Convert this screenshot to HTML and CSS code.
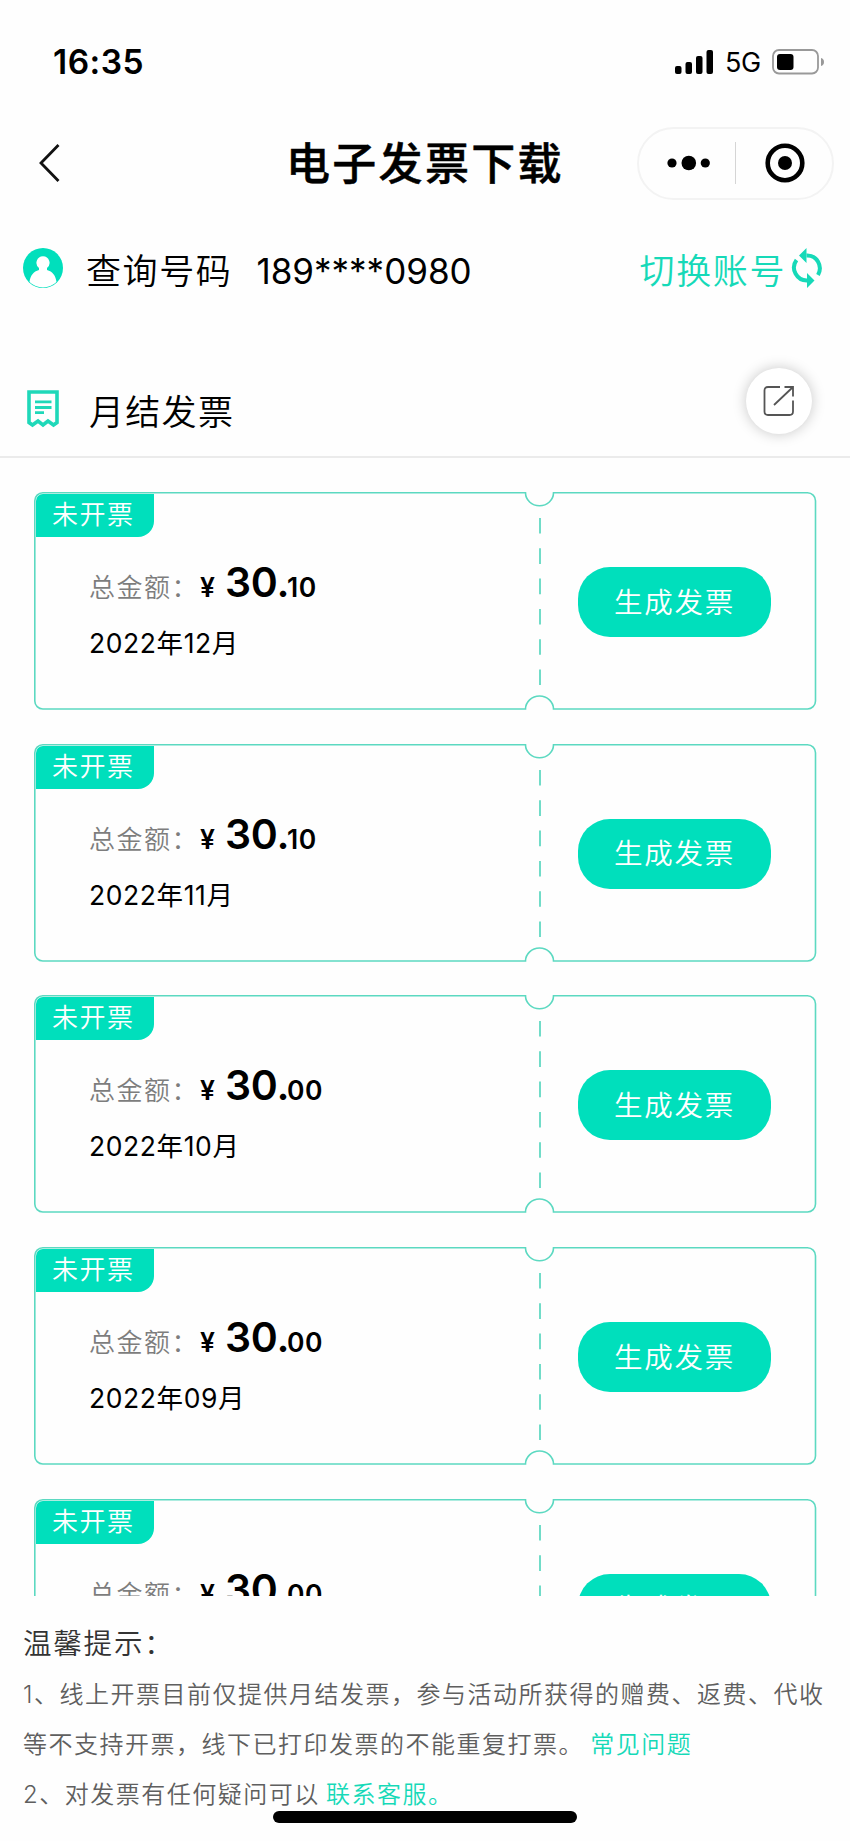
FILE: index.html
```html
<!DOCTYPE html>
<html lang="zh-CN">
<head>
<meta charset="utf-8">
<title>电子发票下载</title>
<link rel="stylesheet" href="styles.css">
</head>
<body>
<svg class="defs" width="0" height="0">
  <symbol id="ticket" viewBox="0 0 783 218">
    <path d="M8.8 .8H491.500A14 13 0 0 0 519.500 .8H773.500A8 8 0 0 1 781.500 8.800V209A8 8 0 0 1 773.500 217H519.500A14 13 0 0 0 491.500 217H8.800A8 8 0 0 1 .8 209V8.800A8 8 0 0 1 8.800 .8" fill="none" stroke="#5cd9c1" stroke-width="1.600"/>
    <path d="M506 26V194" stroke="#71dcc8" stroke-width="2" stroke-dasharray="15.600 14.700"/>
  </symbol>
</svg>
<div class="phone">
  <header class="status">
    <span class="time">16:35</span>
    <div class="signals">
      <svg width="40" height="26" viewBox="0 0 40 26"><rect x="1" y="17" width="6.500" height="8" rx="2"/><rect x="11.500" y="13" width="6.500" height="12" rx="2"/><rect x="22" y="7" width="6.500" height="18" rx="2"/><rect x="32.500" y="1" width="6.500" height="24" rx="2"/></svg>
      <span class="net">5G</span>
      <svg width="54" height="26" viewBox="0 0 54 26"><rect x="1" y="1" width="45" height="23.500" rx="6" fill="none" stroke="#999" stroke-width="1.800"/><rect x="5" y="5" width="16.500" height="16" rx="3"/><path d="M49 9C53 9.500 53 16.500 49 17Z" fill="#999"/></svg>
    </div>
  </header>
  <nav class="nav">
    <svg class="back" width="24" height="42" viewBox="0 0 24 42"><path d="M21.500 3L4 21L21.500 39" fill="none" stroke="#111" stroke-width="2.800"/></svg>
    <h1 class="title">电子发票下载</h1>
    <div class="capsule">
      <svg width="46" height="20" viewBox="0 0 46 20"><circle cx="6" cy="10" r="4.600"/><circle cx="22.800" cy="10" r="7.300"/><circle cx="39.300" cy="10" r="4.600"/></svg>
      <i class="bar"></i>
      <svg width="42" height="42" viewBox="0 0 42 42"><circle cx="21" cy="21" r="17.300" fill="none" stroke="#000" stroke-width="4.600"/><circle cx="21" cy="21" r="7"/></svg>
    </div>
  </nav>
  <section class="account">
    <svg class="avatar" width="40" height="40" viewBox="0 0 40 40"><circle cx="20" cy="20" r="20" fill="#00dfbc"/><path d="M20 8.200a6.600 6.600 0 0 1 4 11.800v2c5.500 1.300 8.800 5.800 9.500 12A19.400 19.400 0 0 1 6.500 34c.7-6.200 4-10.700 9.500-12v-2A6.600 6.600 0 0 1 20 8.200Z" fill="#fff"/></svg>
    <span class="label">查询号码</span>
    <span class="number">189****0980</span>
    <a class="switch">切换账号<svg width="32" height="42" viewBox="0 0 32 42"><g fill="none" stroke="#16d9b8" stroke-width="4"><path d="M15.500 8.500C26 8 32 19 27 28"/><path d="M16.500 33.500C6 34 -1 22 5.500 13"/></g><path d="M15.500 1V16L8 8.500ZM16 26V41L23.500 33.500Z" fill="#16d9b8"/></svg></a>
  </section>
  <section class="heading">
    <svg class="receipt" width="32" height="38" viewBox="0 0 32 38"><path d="M2 2H30V32.500L26.500 35L21 31L16 35L11 31L5.500 35L2 32.500Z" fill="none" stroke="#1fd8b9" stroke-width="3.600"/><path d="M8 11.800H24.500M8 17.500H24.500M8 22.700H17" stroke="#1fd8b9" stroke-width="2.800"/></svg>
    <h2 class="label">月结发票</h2>
    <button class="share"><svg width="32" height="32" viewBox="0 0 32 32"><g fill="none" stroke="#555" stroke-width="1.800"><path d="M17 2H5Q1.500 2 1.500 5.500V26.500Q1.500 30 5 30H26.500Q30 30 30 26.500V15.500"/><path d="M11 20L30 2M21.500 2H30V11.500"/></g></svg></button>
  </section>
  <main class="list">
    <article class="card"><svg class="outline"><use href="#ticket"/></svg><span class="tag">未开票</span><div class="info"><p class="amount"><span class="sum">总金额：</span><b class="yen">¥</b><b class="big">30.</b><b class="cents">10</b></p><p class="date">2022年12月</p></div><button class="make">生成发票</button></article>
    <article class="card"><svg class="outline"><use href="#ticket"/></svg><span class="tag">未开票</span><div class="info"><p class="amount"><span class="sum">总金额：</span><b class="yen">¥</b><b class="big">30.</b><b class="cents">10</b></p><p class="date">2022年11月</p></div><button class="make">生成发票</button></article>
    <article class="card"><svg class="outline"><use href="#ticket"/></svg><span class="tag">未开票</span><div class="info"><p class="amount"><span class="sum">总金额：</span><b class="yen">¥</b><b class="big">30.</b><b class="cents">00</b></p><p class="date">2022年10月</p></div><button class="make">生成发票</button></article>
    <article class="card"><svg class="outline"><use href="#ticket"/></svg><span class="tag">未开票</span><div class="info"><p class="amount"><span class="sum">总金额：</span><b class="yen">¥</b><b class="big">30.</b><b class="cents">00</b></p><p class="date">2022年09月</p></div><button class="make">生成发票</button></article>
    <article class="card"><svg class="outline"><use href="#ticket"/></svg><span class="tag">未开票</span><div class="info"><p class="amount"><span class="sum">总金额：</span><b class="yen">¥</b><b class="big">30.</b><b class="cents">00</b></p></div><button class="make">生成发票</button></article>
  </main>
  <footer class="tips">
    <h3 class="tips-title">温馨提示：</h3>
    <p>1、线上开票目前仅提供月结发票，参与活动所获得的赠费、返费、代收<br>等不支持开票，线下已打印发票的不能重复打票。 <a>常见问题</a></p>
    <p>2、对发票有任何疑问可以 <a>联系客服。</a></p>
  </footer>
  <div class="home"></div>
</div>
</body>
</html>
```
FILE: styles.css
```css
* { box-sizing: border-box; margin: 0; padding: 0; }
body { background: #fefefe; }
button { border: 0; font: inherit; }
.defs { position: absolute; }
.phone {
  position: relative;
  width: 850px;
  height: 1841px;
  overflow: hidden;
  display: flex;
  flex-direction: column;
  background: #fefefe;
  color: #000;
  font-family: Inter, "Noto Sans CJK SC", sans-serif;
  font-weight: 350;
}
.status {
  flex: none;
  height: 124px;
  padding: 0 24px 0 53px;
  display: flex;
  justify-content: space-between;
  align-items: center;
}
.time { font-size: 33.500px; font-weight: 600; line-height: 40px; letter-spacing: .5px; }
.signals { display: flex; align-items: center; }
.net { margin: 2px 12px 0 11px; width: 35px; font-size: 27px; font-weight: 400; line-height: 30px; letter-spacing: -.5px; }
.nav {
  flex: none;
  height: 79px;
  padding: 0 16px 1px 37px;
  display: flex;
  align-items: center;
}
.title { margin: 2px 0 0 225px; width: 351px; font-size: 44px; font-weight: 500; letter-spacing: 2.300px; line-height: 60px; white-space: nowrap; -webkit-text-stroke: .5px #000; }
.capsule {
  width: 197px;
  height: 73px;
  border: 2px solid #f3f3f3;
  border-radius: 37px;
  padding: 0 26px 0 27px;
  display: flex;
  align-items: center;
  justify-content: space-between;
}
.bar { width: 1px; height: 42px; background: #d5d5d5; margin-right: 5px; }
.account {
  flex: none;
  height: 137px;
  padding: 0 27px 0 23px;
  display: flex;
  align-items: center;
}
.avatar { margin-bottom: 7px; }
.label { font-size: 35px; font-weight: 350; letter-spacing: 1.600px; line-height: 48px; margin: -1px 0 0 23px; }
.number { margin: -2px 0 0 24px; font-size: 35px; font-weight: 400; line-height: 48px; }
.switch { margin: -1px 0 0 auto; display: flex; align-items: center; font-size: 35px; letter-spacing: 1.600px; line-height: 48px; color: #16d9b8; }
.switch svg { margin: -6px 0 0 5px; }
.heading {
  flex: none;
  height: 118px;
  padding: 0 38px 0 27px;
  display: flex;
  align-items: flex-start;
  border-bottom: 2px solid #ebebeb;
}
.receipt { margin-top: 50px; }
.heading .label { margin: 48px 0 0 30px; letter-spacing: 1.300px; }
.share {
  width: 66px;
  height: 66px;
  margin: 28px 0 0 auto;
  border-radius: 50%;
  background: #fff;
  box-shadow: 0 0 14px rgba(0, 0, 0, .22);
  display: flex;
  align-items: center;
  justify-content: center;
}
.list {
  flex: none;
  height: 1138px;
  padding: 34px 34px 0;
  overflow: hidden;
  display: flex;
  flex-direction: column;
  gap: 33.700px;
}
.card {
  position: relative;
  flex: none;
  width: 783px;
  height: 218px;
  padding-right: 46px;
  display: flex;
  justify-content: space-between;
  align-items: flex-start;
}
.outline { position: absolute; left: 0; top: 0; width: 783px; height: 218px; }
.tag {
  position: absolute;
  left: 2px;
  top: 2px;
  width: 118px;
  height: 43px;
  padding-left: 16px;
  border-radius: 7px 0 16px 0;
  background: #00dfbc;
  color: #fff;
  font-size: 26px;
  letter-spacing: 1.500px;
  line-height: 41px;
}
.info { padding: 65px 0 0 55px; }
.amount { height: 50px; line-height: 50px; white-space: nowrap; display: flex; align-items: baseline; }
.sum { width: 111px; font-size: 26px; letter-spacing: 1.500px; color: #7d7d7d; }
.amount b { font-weight: 600; font-size: 26.500px; }
.amount .yen { width: 25px; }
.amount .big { font-size: 41px; letter-spacing: -.3px; width: 62px; }
.amount .cents { letter-spacing: .6px; }
.date { margin-top: 16px; font-size: 26.500px; font-weight: 370; line-height: 40px; letter-spacing: .6px; }
.make {
  width: 193px;
  height: 70px;
  margin-top: 75px;
  padding-bottom: 4px;
  border-radius: 32px;
  background: #00dfbc;
  color: #fff;
  font-size: 28.500px;
  letter-spacing: 1.800px;
}
.tips { padding: 23px 0 0 23px; color: #5f5f5f; font-size: 24px; letter-spacing: 1.500px; line-height: 50px; white-space: nowrap; }
.tips-title { margin-bottom: 1px; font-size: 28.500px; font-weight: 350; letter-spacing: 1.800px; line-height: 50px; color: #333; }
.tips a { margin-left: -2px; color: #16d9b8; }
.home { position: absolute; left: 273px; top: 1811px; width: 304px; height: 12px; border-radius: 6px; background: #000; }
```
